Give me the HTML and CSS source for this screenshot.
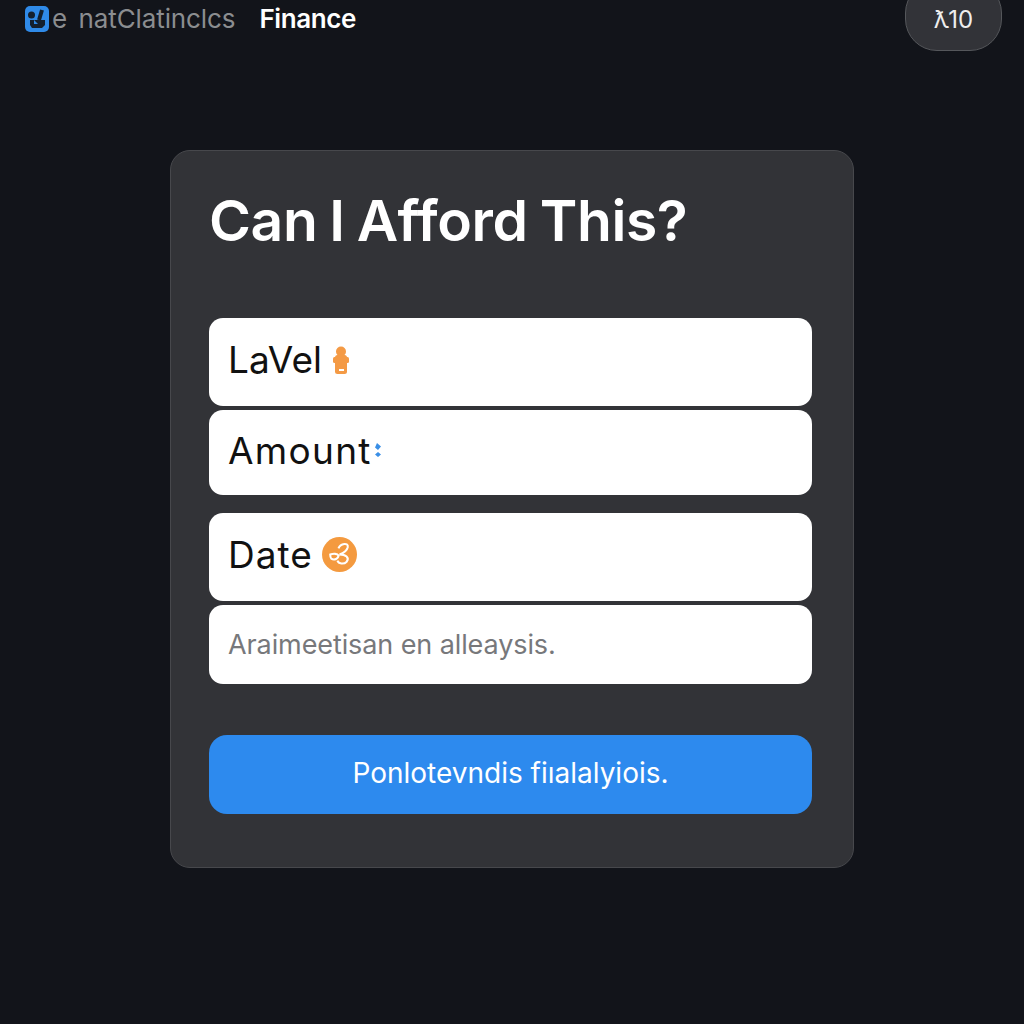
FILE: index.html
```html
<!DOCTYPE html>
<html lang="en">
<head>
    <meta charset="UTF-8">
    <meta name="viewport" content="width=device-width, initial-scale=1.0">
    <title>Can I Afford This?</title>
    <link rel="stylesheet" href="styles.css">
</head>
<body>
    <header class="topbar">
        <div class="brand">
            <svg class="brand-icon" viewBox="0 0 24 26" aria-hidden="true">
                <rect width="24" height="26" rx="5" fill="#2f8ae8"/>
                <circle cx="6.500" cy="9" r="3.500" fill="#14202e"/>
                <path d="M14 14l3-10" stroke="#14202e" stroke-width="4" fill="none"/>
                <path d="M5 14h15v5l-3 3H7l-2-3z" fill="#14202e"/>
                <path d="M9 14l4 4H9z" fill="#2f8ae8"/>
            </svg>
            <span class="brand-name">e  natClatinclcs</span>
            <span class="brand-section">Finance</span>
        </div>
        <button class="pill">&#411;10</button>
    </header>

    <main class="card">
        <h1>Can I Afford This?</h1>

        <div class="fields">
            <div class="group">
                <div class="field field-label">
                    <span>LaVel</span>
                    <svg class="icon-figure" viewBox="0 0 18 28" aria-hidden="true">
                        <circle cx="9" cy="5.500" r="5" fill="#f49a45"/>
                        <rect x="3" y="9" width="12" height="19" rx="2.500" fill="#f49a45"/>
                        <rect x="1" y="11" width="16" height="6" rx="1.500" fill="#f49a45"/>
                        <rect x="7" y="23" width="5" height="2" fill="#fff"/>
                    </svg>
                </div>
                <div class="field field-amount">
                    <span>Amount</span>
                    <svg class="icon-dots" viewBox="0 0 8 14" aria-hidden="true">
                        <path d="M3 0l4 3.500-3 3.500-3-2.500zM4 9l3 2.500-3 2.500-3-2.500z" fill="#3a8fe6"/>
                    </svg>
                </div>
            </div>
            <div class="group">
                <div class="field field-date">
                    <span>Date</span>
                    <svg class="icon-coin" viewBox="0 0 34 34" aria-hidden="true">
                        <circle cx="17" cy="17" r="17" fill="#f49a3f"/>
                        <path d="M16 11C18 6 26 5 25 10C24 14 20 16 17 17C23 17 27 20 24 24C21 27 16 26 15 23M8 17C11 16 15 16 16 18C16 21 12 23 9 21C8 20 8 18 8 17Z" fill="none" stroke="#fff" stroke-width="2"/>
                    </svg>
                </div>
                <div class="field field-note">
                    <span>Araimeetisan en alleaysis.</span>
                </div>
            </div>
        </div>

        <button class="submit">Ponlotevndis fiıalalyiois.</button>
    </main>
</body>
</html>
```

FILE: styles.css
```css
* {
    box-sizing: border-box;
}
html, body {
    height: 100%;
}
body {
    margin: 0;
    overflow: hidden;
    font-family: Inter, "Noto Sans", sans-serif;
    background-color: #12141a;
    color: #111;
}
.topbar {
    display: flex;
    justify-content: space-between;
    align-items: flex-end;
    height: 51px;
    padding: 0 22px 0 25px;
}
.brand {
    display: flex;
    align-items: center;
    align-self: flex-start;
    height: 37px;
}
.brand-icon {
    width: 24px;
    height: 26px;
    margin-right: 3px;
}
.brand-name {
    font-size: 26px;
    letter-spacing: -0.1px;
    word-spacing: -1.5px;
    color: #8b8d90;
    white-space: pre;
}
.brand-section {
    margin-left: 24px;
    font-size: 26px;
    font-weight: 600;
    letter-spacing: -0.4px;
    color: #fff;
}
.pill {
    width: 97px;
    height: 70px;
    border: 1px solid #55575b;
    border-radius: 32px;
    padding: 6px 0 0;
    background: #323338;
    color: #eee;
    font-family: inherit;
    font-size: 24px;
}
.card {
    width: 684px;
    height: 718px;
    margin: 99px 0 0 170px;
    padding: 36px 41px 0 38px;
    background: #323337;
    border: 1px solid #47484c;
    border-radius: 20px;
}
.card h1 {
    margin: 0 0 63px;
    font-size: 57px;
    line-height: 68px;
    font-weight: 600;
    letter-spacing: -0.4px;
    word-spacing: -2px;
    color: #fff;
}
.fields {
    display: flex;
    flex-direction: column;
    gap: 18px;
}
.group {
    display: flex;
    flex-direction: column;
    gap: 4px;
}
.field {
    display: flex;
    align-items: center;
    padding: 0 19px 5px;
    background: #fff;
    border-radius: 14px;
    font-size: 37px;
    color: #111;
}
.field-label {
    height: 88px;
}
.field-amount {
    height: 85px;
    letter-spacing: 1.3px;
}
.field-date {
    height: 88px;
    letter-spacing: 1px;
}
.field-note {
    height: 79px;
    padding-bottom: 0;
    font-size: 27px;
    letter-spacing: -0.1px;
    color: #77787b;
}
.icon-figure {
    width: 18px;
    height: 28px;
    margin-left: 10px;
}
.icon-dots {
    width: 8px;
    height: 14px;
    margin-left: 2px;
}
.icon-coin {
    width: 35px;
    height: 35px;
    margin-left: 9px;
}
.submit {
    display: block;
    width: 100%;
    height: 79px;
    margin-top: 51px;
    padding-bottom: 4px;
    border: none;
    border-radius: 18px;
    background: #2d8aee;
    color: #fff;
    font-family: inherit;
    font-size: 28px;
    letter-spacing: 0;
    cursor: pointer;
}
```
